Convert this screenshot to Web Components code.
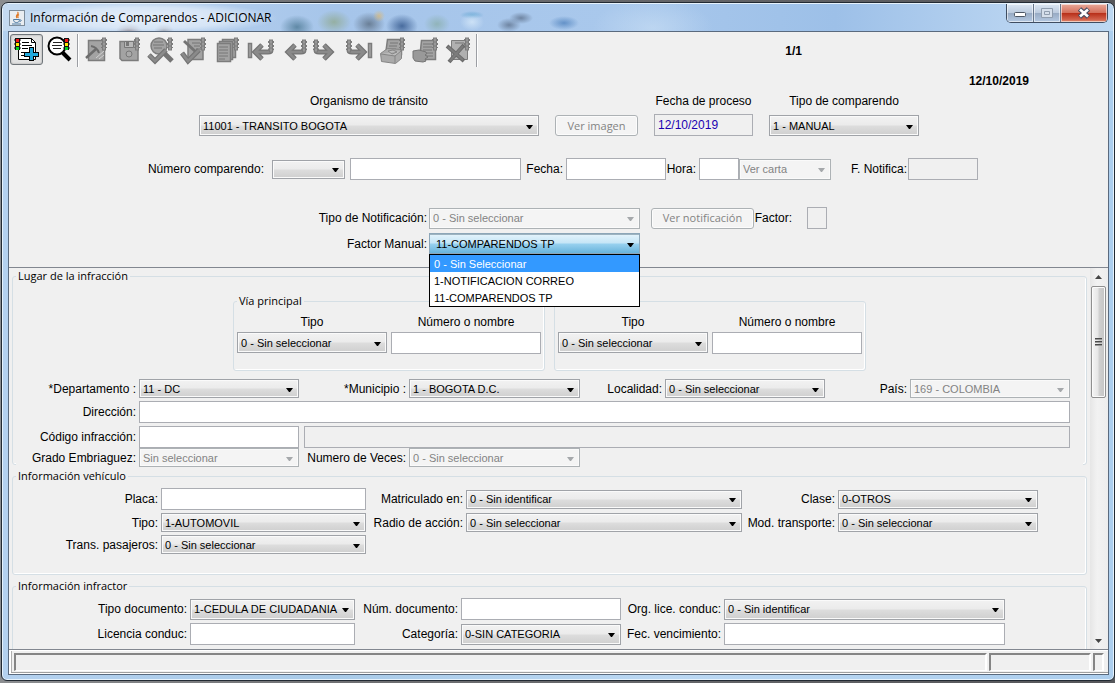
<!DOCTYPE html>
<html lang="es">
<head>
<meta charset="utf-8">
<title>Información de Comparendos - ADICIONAR</title>
<style>
  html, body { margin: 0; height: 100%; }
  body {
    background: linear-gradient(90deg, #8b8d90, #6f7073 30%, #55565a);
    font-family: "Liberation Sans", Arial, sans-serif;
    font-size: 12px;
    line-height: 14px;
    color: #000;
    overflow: hidden;
  }
  .row { display: flex; align-items: center; }
  .header-form { width: 836px; margin: 0 auto; padding-left: 5px; }
  .process { align-items: flex-end; padding: 6px 0 22px 56px; gap: 16px; }
  .number { padding-bottom: 27px; }
  .notice { padding-bottom: 4px; }
  .manual { padding-bottom: 13px; }
  .date { padding: 6px 79px 0 0; text-align: right; font-weight: bold; }
  .streets { justify-content: center; gap: 9px; padding: 11px 0 8px; }
  .street-fields { align-items: flex-start; gap: 4px; padding: 7px 3px 16px; }
  .block { display: flex; flex-direction: column; gap: 3px; }
  .place { margin: 0 3px -3px; background: #f0f0f0; padding-right: 13px; }
  .vehicle { padding: 5px 3px 20px; }
  .person { padding: 5px 3px 20px; }
  .grow { flex: 1; }
  .gap-small { margin-left: 5px; }
  .gap-medium { margin-left: 11px; }
</style>
</head>
<body>
<app-window>
  <span slot="title">Información de Comparendos - ADICIONAR</span>

  <tool-bar></tool-bar>
  <div class="date">12/10/2019</div>

  <div class="header-form">
    <div class="row process">
      <form-field stacked label="Organismo de tránsito" value="11001 - TRANSITO BOGOTA" style="--control:340px;--height:21px;--gap:7px"></form-field>
      <push-button width="83">Ver imagen</push-button>
      <form-field stacked label="Fecha de proceso" kind="text" readonly value="12/10/2019" style="--control:99px;--ink:#1a00b0"></form-field>
      <form-field stacked label="Tipo de comparendo" value="1 - MANUAL" style="--control:150px;--height:21px;--gap:7px"></form-field>
    </div>
    <div class="row number">
      <form-field label="Número comparendo:" value="" style="--label:121px;--gap:8px;--control:73px"></form-field>
      <form-field class="gap-small" hint="Número" kind="text" style="--control:171px"></form-field>
      <form-field label="Fecha:" kind="text" style="--label:42px;--control:100px"></form-field>
      <form-field label="Hora:" kind="text" style="--label:30px;--control:40px"></form-field>
      <form-field hint="Carta" value="Ver carta" disabled style="--control:92px;--height:21px"></form-field>
      <form-field label="F. Notifica:" kind="text" readonly style="--label:76px;--gap:1px;--control:70px"></form-field>
    </div>
    <div class="row notice">
      <form-field label="Tipo de Notificación:" value="0 - Sin seleccionar" disabled style="--label:284px;--gap:2px;--control:211px;--height:21px"></form-field>
      <push-button class="gap-medium" width="103">Ver notificación</push-button>
      <form-field label="Factor:" kind="text" readonly style="--label:38px;--gap:15px;--control:20px"></form-field>
    </div>
    <div class="row manual">
      <form-field open label="Factor Manual:" value="11-COMPARENDOS TP" choices="0 - Sin Seleccionar|1-NOTIFICACION CORREO|11-COMPARENDOS TP" style="--label:284px;--gap:2px;--control:211px;--height:21px"></form-field>
    </div>
  </div>

  <scroll-pane>
    <group-box legend="Lugar de la infracción">
      <div class="row streets">
        <group-box legend="Vía principal">
          <div class="row street-fields">
            <form-field stacked label="Tipo" value="0 - Sin seleccionar" style="--control:150px;--height:21px;--gap:3px"></form-field>
            <form-field stacked label="Número o nombre" kind="text" style="--control:150px;--gap:3px"></form-field>
          </div>
        </group-box>
        <group-box>
          <div class="row street-fields">
            <form-field stacked label="Tipo" value="0 - Sin seleccionar" style="--control:150px;--height:21px;--gap:3px"></form-field>
            <form-field stacked label="Número o nombre" kind="text" style="--control:150px;--gap:3px"></form-field>
          </div>
        </group-box>
      </div>
      <div class="block place">
        <div class="row">
          <form-field label="*Departamento :" value="11 - DC" style="--label:120px;--control:160px"></form-field>
          <form-field label="*Municipio :" value="1 - BOGOTA D.C." style="--label:107px;--control:171px"></form-field>
          <form-field label="Localidad:" value="0 - Sin seleccionar" style="--label:82px;--control:160px"></form-field>
          <form-field class="grow" label="País:" value="169 - COLOMBIA" disabled style="--label:1fr;--control:160px"></form-field>
        </div>
        <div class="row">
          <form-field class="grow" label="Dirección:" kind="text" style="--label:120px;--control:1fr"></form-field>
        </div>
        <div>
          <div class="row">
            <form-field label="Código infracción:" kind="text" style="--label:120px;--control:160px"></form-field>
            <form-field class="grow gap-small" hint="Descripción de la infracción" kind="text" readonly style="--control:1fr"></form-field>
          </div>
          <div class="row">
            <form-field label="Grado Embriaguez:" value="Sin seleccionar" disabled style="--label:120px;--control:160px"></form-field>
            <form-field label="Numero de Veces:" value="0 - Sin seleccionar" disabled style="--label:107px;--control:171px"></form-field>
          </div>
        </div>
      </div>
    </group-box>

    <group-box legend="Información vehículo">
      <div class="block vehicle">
        <div class="row">
          <form-field label="Placa:" kind="text" style="--label:142px;--control:205px"></form-field>
          <form-field label="Matriculado en:" value="0 - Sin identificar" style="--label:97px;--control:276px"></form-field>
          <form-field label="Clase:" value="0-OTROS" style="--label:93px;--control:200px"></form-field>
        </div>
        <div class="row">
          <form-field label="Tipo:" value="1-AUTOMOVIL" style="--label:142px;--control:205px"></form-field>
          <form-field label="Radio de acción:" value="0 - Sin seleccionar" style="--label:97px;--control:276px"></form-field>
          <form-field label="Mod. transporte:" value="0 - Sin seleccionar" style="--label:93px;--control:200px"></form-field>
        </div>
        <div class="row">
          <form-field label="Trans. pasajeros:" value="0 - Sin seleccionar" style="--label:142px;--control:205px"></form-field>
        </div>
      </div>
    </group-box>

    <group-box legend="Información infractor">
      <div class="block person">
        <div class="row">
          <form-field label="Tipo documento:" value="1-CEDULA DE CIUDADANIA" style="--label:171px;--control:165px;--height:21px"></form-field>
          <form-field label="Núm. documento:" kind="text" style="--label:103px;--control:160px"></form-field>
          <form-field label="Org. lice. conduc:" value="0 - Sin identificar" style="--label:100px;--control:281px;--height:21px"></form-field>
        </div>
        <div class="row">
          <form-field label="Licencia conduc:" kind="text" style="--label:171px;--control:165px"></form-field>
          <form-field label="Categoría:" value="0-SIN CATEGORIA" style="--label:103px;--control:160px;--height:21px"></form-field>
          <form-field label="Fec. vencimiento:" kind="text" style="--label:100px;--control:281px"></form-field>
        </div>
      </div>
    </group-box>
  </scroll-pane>

  <status-bar></status-bar>
</app-window>

<script>
const define = (name, render) => customElements.define(name, class extends HTMLElement {
  constructor() { super(); this.attachShadow({ mode: "open" }); }
  connectedCallback() { this.shadowRoot.innerHTML = render(this); }
});

/* Window frame: glass title bar, caption buttons and client area */
define("app-window", () => `
<style>
  :host { display: flex; flex-direction: column; box-sizing: border-box; height: calc(100vh - 4px); margin: 2px 0 2px 1px;
    border: 1px solid #222a33; border-radius: 7px 7px 6px 6px; overflow: hidden; padding: 0 5px 5px 6px;
    box-shadow: inset 0 0 0 1px #e6f2fc;
    background: linear-gradient(90deg, #b4d1ef, #a9cbe9 30%, #bbd8f3 60%, #acceee); }
  header { display: flex; flex: none; height: 27px; margin: 1px -4px 0 -5px; padding: 0 5px 0 6px; gap: 5px; align-items: center; border-radius: 5px 5px 0 0;
    background:
      radial-gradient(ellipse 130px 16px at 145px 14px, #f2f7fdd0, #eaf2fba0 65%, transparent),
      radial-gradient(ellipse 13px 8px at 126px 27px, #6b5c66c0, transparent),
      radial-gradient(ellipse 10px 7px at 161px 27px, #6b6c78b0, transparent),
      radial-gradient(ellipse 17px 12px at 294px 23px, #47748fc0, transparent),
      radial-gradient(ellipse 17px 12px at 331px 18px, #8fa88bc0, transparent),
      radial-gradient(circle 6px at 376px 12px, #d9b878c0, transparent),
      radial-gradient(ellipse 16px 12px at 366px 20px, #5c6f84d0, transparent),
      radial-gradient(ellipse 16px 12px at 399px 22px, #33578cd0, transparent),
      radial-gradient(ellipse 13px 10px at 434px 20px, #7fa69490, transparent),
      radial-gradient(ellipse 12px 9px at 469px 18px, #d8eafac0, transparent),
      radial-gradient(ellipse 12px 4px at 469px 11px, #5aa2d0b0, transparent),
      radial-gradient(ellipse 12px 7px at 506px 21px, #5c6f8ac0, transparent),
      radial-gradient(ellipse 12px 6px at 518px 14px, #5c6f8ac0, transparent),
      radial-gradient(ellipse 15px 7px at 561px 19px, #4d80bcc0, transparent),
      radial-gradient(ellipse 60px 30px at 650px 24px, #d2e5f780, transparent),
      linear-gradient(90deg, #c4daf1, #a6c5ea 30%, #a9c8ec 55%, #9dc0e8 75%, #b6d2f0 90%, #bdd8f2); }
  h1 { margin: 0; flex: 1; font: 12px/16px "Open Sans", sans-serif; white-space: nowrap; }
  .caption { display: flex; align-self: flex-start; border: 1px solid #3f4d61; border-top: 0; border-radius: 0 0 5px 5px; overflow: hidden; }
  button { appearance: none; box-sizing: border-box; width: 27px; height: 18px; margin: 0; padding: 0; border: 0; border-right: 1px solid #66768b;
    box-shadow: inset 0 0 0 1px #ffffff90; background: linear-gradient(#dbe6f2, #bccbde 48%, #98abc4 52%, #b4c9e2); }
  .close { width: 46px; border: 0; background: linear-gradient(#e9aa9b, #d4705c 48%, #b8301a 52%, #d1604a 85%, #e08d70); }
  svg { display: block; margin: auto; }
  main { display: flex; flex-direction: column; flex: 1; min-height: 0; border: 1px solid #5a6a7e; background: #f0f0f0; }
</style>
<header>
  <svg style="margin:0" width="16" height="16" viewBox="0 0 16 16" aria-hidden="true">
    <rect x=".5" y=".5" width="15" height="15" fill="#e9edf1" stroke="#7d8c9a"/>
    <path d="M8.500 2C11 4 5.500 5 8 8M10 4.500C7.500 6 9.500 6.500 9 8" fill="none" stroke="#e07a28" stroke-width="1.200"/>
    <path d="M4.500 9.500h6c0 2-1 3-3 3s-3-1-3-3M11 10c2-.5 1.500 1.500-.5 1.700M3 14h9" fill="none" stroke="#4f7ca5"/>
  </svg>
  <h1><slot name="title"></slot></h1>
  <div class="caption">
    <button aria-label="Minimizar"><svg width="14" height="10" viewBox="0 0 14 10"><rect x="1.500" y="4.500" width="11" height="4" rx="1" fill="#fff" stroke="#4d5765"/></svg></button>
    <button aria-label="Maximizar" disabled><svg width="12" height="10" viewBox="0 0 12 10"><path d="M.5.5h11v9H.5zM3.500 3.500h5v3h-5z" fill="#d5dfeb" stroke="#8f9dae"/></svg></button>
    <button class="close" aria-label="Cerrar"><svg width="14" height="12" viewBox="0 0 14 12"><path d="M2.500 2l9 8M11.500 2l-9 8" stroke="#474d63" stroke-width="5"/><path d="M3 2.500l8 7M11 2.500l-8 7" stroke="#fff" stroke-width="2.600"/></svg></button>
  </div>
</header>
<main><slot></slot></main>`);

/* Toolbar artwork, one 33 x 31 drawing per command */
const G = 'fill="#a3a3a3" stroke="#7c7c7c" stroke-width="1.500"';
const lights = (x, y = 4) => `<path d="M${x - 1} ${y + 1}h6v2h-6zm0 4h6v2h-6zm0 4h6v1h-6z" fill="#7c7c7c"/><rect x="${x + .5}" y="${y}" width="3" height="12" fill="#999" stroke="#7c7c7c"/><path d="M${x + .5} ${y + 4}h3m-3 4h3" stroke="#7c7c7c"/>`;
const colourLights = x => `<rect x="${x}" y="4" width="5" height="12" fill="#111"/><path d="M${x - 1} 6h7M${x - 1} 10h7M${x - 1} 14h7" stroke="#111"/><rect x="${x + 1}" y="5" width="3" height="3" fill="#f01414"/><rect x="${x + 1}" y="9" width="3" height="3" fill="#ffe600"/><rect x="${x + 1}" y="13" width="3" height="3" fill="#00d020"/>`;
const stroked = (d, w = 5) => `<path d="${d}" fill="none" stroke="#747474" stroke-width="${w}"/><path d="${d}" fill="none" stroke="#8a8a8a" stroke-width="${w - 2.4}"/>`;
const arrowLeft = "M27 14v2q0 2-3 2H11M18 11l-7 7 7 7";
const arrowRight = "M6 14v2q0 2 3 2h12M14 11l7 7-7 7";
const icons = [
  ["Adicionar", `<path d="M8.500 4.500h13l4 4v17h-17z" fill="#fff" stroke="#000"/><path d="M21.500 4.500v4h4M12 8.500h7M12 11.500h10M12 14.500h6M11 18.500h4M11 21.500h4" fill="none" stroke="#000"/>${colourLights(5)}<path d="M19 13h5v5h5v5h-5v4h-5v-4h-5v-5h5z" fill="#000"/><path d="M20 14h3v5h5v3h-5v4h-3v-4h-5v-3h5z" fill="#20a8dc"/>`],
  ["Consultar", `<path d="M18 17l9 9" stroke="#000" stroke-width="4"/><circle cx="14" cy="12" r="8.500" fill="#fff" stroke="#000" stroke-width="2"/><path d="M10 8.500h9M9 11.500h10M10 14.500h8" stroke="#222"/>${colourLights(21)}`],
  ["Modificar", `<rect x="9.500" y="6.500" width="16" height="20" ${G}/><path d="M7 24L17 15" stroke="#6c6c6c" stroke-width="2.500"/><path d="M12 12q6 1 8 7" fill="none" stroke="#6c6c6c" stroke-width="2"/><path d="M17 24l8-7M20 25l5-4" fill="none" stroke="#d0d0d0"/>${lights(23)}`],
  ["Guardar", `<path d="M8 7.500h15l3 3v16H10l-2-2z" ${G}/><path d="M12.500 7.500h9v6h-9z" fill="#b8b8b8" stroke="#777"/><path d="M14 8h3v4h-3z" fill="#777"/><circle cx="17" cy="20" r="3" fill="#aaa" stroke="#777"/>${lights(23)}`],
  ["Validar consulta", `<path d="M18 18l9 9" stroke="#747474" stroke-width="5"/><circle cx="14" cy="12" r="8" ${G}/><path d="M9 8h9M8 11h11M9 14h8" stroke="#747474" fill="none"/>${stroked("M4 21l6 6 11-11")}${lights(23)}`],
  ["Aprobar", `<path d="M10 5.500h15v20H10z" ${G}/><path d="M14 9h8M16 12h6M18 15h5" stroke="#747474"/><path d="M6 7l13 12" stroke="#747474" stroke-width="3"/>${stroked("M4 19l6 8 11-11")}${lights(23)}`],
  ["Listar", `<path d="M11.500 5.500h13v18h-13z" ${G}/><path d="M8.500 7.500h13v18h-13z" ${G}/><path d="M6.500 9.500h13v18h-13z" ${G}/><path d="M8 13h9M8 16h9M8 19h9M8 22h9M8 25h6" stroke="#777"/>${lights(23)}`],
  ["Primero", `${stroked(arrowLeft)}<rect x="4.500" y="9.500" width="3" height="14" ${G}/>${lights(25, 6)}`],
  ["Anterior", `${stroked(arrowLeft)}${lights(25, 6)}`],
  ["Siguiente", `${stroked(arrowRight)}${lights(4, 6)}`],
  ["Último", `${stroked(arrowRight)}<rect x="25.500" y="9.500" width="3" height="14" ${G}/>${lights(4, 6)}`],
  ["Imprimir", `<path d="M11.500 5.500h14v15h-16z" ${G}/><path d="M14 9h8M13 12h8M13 15h7" stroke="#777"/><path d="M4.500 19.500l7-5 14 1v9l-6 5-14-2z" fill="#aaa" stroke="#858585"/><path d="M5 20l14 2 6-5M19 22v7M12 17l5-1 4 2-5 2z" fill="#bcbcbc" stroke="#858585"/>${lights(24)}`],
  ["Entregar", `<path d="M12.500 6.500h14v19h-16z" ${G}/><path d="M14 10h9M14 13h9M14 16h9M17 19h7M17 22h7" stroke="#777"/><path d="M4 17l6-1 7 2q2 2-1 3l3 2-3 2 1 2-3 1-8-1-2-3H4z" fill="#999" stroke="#747474"/>${lights(24)}`],
  ["Eliminar", `<path d="M9.500 6.500h16v19h-16z" fill="#b0b0b0" stroke="#7c7c7c"/><path d="M13 9h9" stroke="#777"/><path d="M5 12l17 15M22 11L7 28" stroke="#6c6c6c" stroke-width="4"/><path d="M6 13l15 13M21 12L8 27" stroke="#7c7c7c" stroke-width="2"/>${lights(23)}`],
];
define("tool-bar", () => `
<style>
  :host { display: flex; flex: none; box-sizing: border-box; height: 36px; padding: 2px 306px 0 1px; align-items: flex-start; }
  button { appearance: none; box-sizing: border-box; width: 33px; height: 31px; margin: 0; padding: 0; border: 1px solid transparent; border-radius: 3px; background: none; }
  button.on { border-color: #6f757a; background: #e2e2e2; box-shadow: inset 0 0 2px #999; }
  svg { display: block; margin: -1px; }
  i { width: 1px; height: 33px; margin-left: 1px; background: #9c9ea3; border-right: 1px solid #fff; box-sizing: content-box; }
  output { margin-left: auto; font-weight: bold; line-height: 14px; padding-top: 10px; }
</style>
${icons.map(([name, art], n) => `<button aria-label="${name}" ${n ? "" : 'class="on"'} ${n > 1 ? "disabled" : ""}><svg width="33" height="31" viewBox="0 0 33 31">${art}</svg></button>${n === 1 || n === 13 ? "<i></i>" : ""}`).join("")}
<output>1/1</output>`);

define("push-button", el => `
<style>
  :host { display: block; flex: none; width: ${el.getAttribute("width")}px; }
  button { appearance: none; display: block; box-sizing: border-box; width: 100%; height: 21px; margin: 0; padding: 0; border: 1px solid #adb2b5; border-radius: 3px;
    background: #f4f4f4; box-shadow: inset 0 0 0 1px #fcfcfc; color: #838383; font: 11px/14px "Open Sans", sans-serif; white-space: nowrap; }
</style>
<button disabled><slot></slot></button>`);

/* Labelled text box or drop-down; the caption sits beside the control or above it */
define("form-field", el => {
  const at = name => el.getAttribute(name) || "";
  const has = name => el.hasAttribute(name);
  const caption = at("label") ? `<label for="c">${at("label")}</label>` : "";
  const aria = caption ? "" : `aria-label="${at("hint")}"`;
  const choices = at("choices").split("|");
  const control = at("kind") === "text"
    ? `<input id="c" type="text" value="${at("value")}" ${aria} ${has("readonly") ? "readonly" : ""}>`
    : `<select id="c" ${aria} ${has("disabled") ? "disabled" : ""}><option>${at("value")}</option></select><svg width="7" height="4" viewBox="0 0 7 4" aria-hidden="true"><path d="M0 0h7L4 4H3z"/></svg>`;
  const popup = has("open") ? `<ul role="listbox">${choices.map((c, n) => `<li role="option" aria-selected="${n === 0}">${c}</li>`).join("")}</ul>` : "";
  const columns = has("stacked") || !caption ? "var(--control)" : "var(--label) var(--control)";
  return `
<style>
  :host { display: grid; grid-template-columns: ${columns}; gap: var(--gap, ${has("stacked") ? 6 : 3}px); align-items: center; }
  label { text-align: ${has("stacked") ? "center" : "right"}; white-space: nowrap; }
  .control { position: relative; min-width: 0; }
  input, select { appearance: none; display: block; box-sizing: border-box; width: 100%; margin: 0; border-radius: 0; border: 1px solid #abadb3; outline: 0; font-family: inherit; }
  input { height: 22px; padding: 0 3px; background: #fff; color: var(--ink, #000); font-size: 12px; }
  input[readonly] { background: #f0f0f0; }
  select { height: var(--height, 19px); padding: 0 16px 0 3px; border-color: #a0a3a8; color: #000; opacity: 1; font-size: 11px; box-shadow: inset 0 0 0 1px #fafafa;
    background: linear-gradient(#f2f2f2, #ebebeb 48%, #dddddd 52%, #cfcfcf); }
  select:disabled { color: #838383; border-color: #adb2b5; background: #f4f4f4; }
  svg { position: absolute; right: 6px; top: calc(50% - 1px); pointer-events: none; }
  select:disabled + svg { fill: #a5a8ab; }
  ${has("open") ? "select { padding-left: 6px; border-color: #8ca6b8; box-shadow: inset 0 1px #9db3c0; background: linear-gradient(#e5f4fc, #c4e5f6 48%, #98d1ef 52%, #68b3db); }" : ""}
  ul { position: absolute; z-index: 5; top: 100%; left: 0; right: 0; margin: 0; padding: 0; border: 1px solid #000; background: #fff; list-style: none; font-size: 11px; line-height: 16px; }
  li { box-sizing: border-box; padding: 1px 4px 0; height: 17px; white-space: nowrap; }
  li[aria-selected="true"] { background: #3399ff; color: #fff; }
</style>
${caption}<div class="control">${control}${popup}</div>`;
});

define("group-box", el => `
<style>
  :host { display: block; }
  fieldset { min-width: 0; margin: 0; padding: 0; border: 1px solid #d5dfe5; border-radius: 3px; box-shadow: inset -1px -1px #fff; }
  legend { margin-left: 3px; padding: 0 2px; height: 14px; font: 11px/14px "Open Sans", sans-serif; }
</style>
<fieldset><legend>${el.getAttribute("legend") || "&nbsp;"}</legend><slot></slot></fieldset>`);

define("scroll-pane", () => `
<style>
  :host { display: flex; flex: 1; min-height: 0; border: solid #828790; border-width: 1px 0; }
  .view { display: flex; flex-direction: column; gap: 4px; flex: 1; min-width: 0; overflow: hidden; padding: 1px 3px 0; }
  .bar { display: flex; flex-direction: column; flex: none; box-sizing: border-box; width: 18px; padding: 0 2px 0 1px; background: linear-gradient(90deg, #e6e6e6, #f2f2f2 40%, #ededed); align-items: center; }
  .arrow { display: block; height: 18px; box-sizing: border-box; padding-top: 7px; }
  .thumb { box-sizing: border-box; width: 15px; height: 112px; border: 1px solid #8f8f8f; border-radius: 2px; box-shadow: inset 0 0 0 1px #fafafa;
    background: linear-gradient(90deg, #f5f5f5, #e6e6e6 45%, #d0d0d0 55%, #c4c4c4); display: grid; place-items: center; }
  .down { margin-top: auto; padding-top: 8px; }
</style>
<div class="view"><slot></slot></div>
<div class="bar">
  <span class="arrow"><svg width="7" height="4" viewBox="0 0 7 4" style="display:block"><path d="M0 4h7L3.500 0z" fill="#444"/></svg></span>
  <div class="thumb"><svg width="7" height="8" viewBox="0 0 7 8"><path d="M0 .5h7M0 3.500h7M0 6.500h7" stroke="#4a4a4a"/><path d="M0 1.500h7M0 4.500h7M0 7.500h7" stroke="#999"/></svg></div>
  <span class="arrow down"><svg width="7" height="4" viewBox="0 0 7 4" style="display:block"><path d="M0 0h7L3.500 4z" fill="#444"/></svg></span>
</div>`);

define("status-bar", () => `
<style>
  :host { display: flex; flex: none; box-sizing: border-box; height: 24px; padding: 2px 4px 2px 3px; gap: 2px; border: solid #fff; border-width: 1px 0 1px 2px; box-shadow: inset 0 -1px #a0a0a0, inset 1px 0 #b0b0b0; }
  div { box-sizing: border-box; border: solid; border-width: 2px 2px 1px; border-color: #858585 #fff #fff #858585; width: 102px; }
  .message { flex: 1; }
  .grip { width: 11px; }
</style>
<div class="message"></div><div></div><div class="grip"></div>`);
</script>
</body>
</html>
